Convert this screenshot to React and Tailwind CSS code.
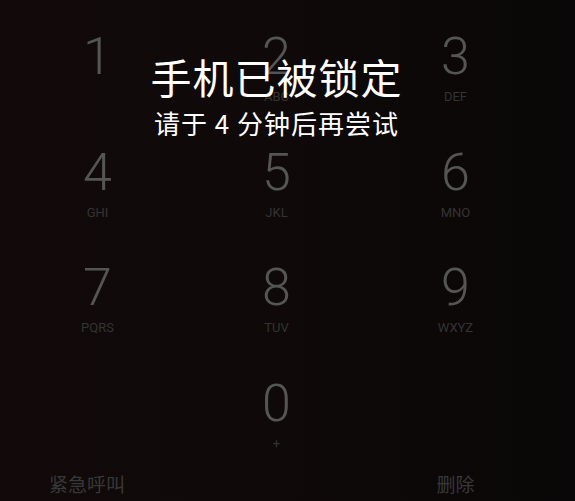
import React from "react";

const keys = [
  { d: "1", l: "" },
  { d: "2", l: "ABC" },
  { d: "3", l: "DEF" },
  { d: "4", l: "GHI" },
  { d: "5", l: "JKL" },
  { d: "6", l: "MNO" },
  { d: "7", l: "PQRS" },
  { d: "8", l: "TUV" },
  { d: "9", l: "WXYZ" },
];

const Key = ({ d, l }) => (
  <div className="h-[115.5px] flex flex-col items-center">
    <div className="text-[52px] leading-none font-light text-[#555555] font-['Roboto',sans-serif]">
      {d}
    </div>
    <div className="mt-[7px] h-[13px] text-[13px] leading-none text-[#343434] font-['Roboto',sans-serif]">
      {l}
    </div>
  </div>
);

const App = () => {
  return (
    <div className="relative w-[575px] h-[501px] overflow-hidden bg-gradient-to-r from-[#120a0a] via-[#0f0909] to-[#090707]">
      {/* keypad */}
      <div className="ml-[8px] w-[537px] pt-[31px]">
        <div className="grid grid-cols-3">
          {keys.map((k) => (
            <Key key={k.d} d={k.d} l={k.l} />
          ))}
          <div />
          <div className="flex flex-col items-center">
            <div className="text-[52px] leading-none font-light text-[#555555] font-['Roboto',sans-serif]">
              0
            </div>
            <div className="mt-[7px] text-[13px] leading-none text-[#343434] font-['Roboto',sans-serif]">
              +
            </div>
          </div>
          <div />
        </div>

        <div className="grid grid-cols-3 mt-[24px] text-[19px] leading-none text-[#383838] font-['Noto_Sans_CJK_SC',sans-serif]">
          <div className="pl-[41px]">紧急呼叫</div>
          <div />
          <div className="text-center">删除</div>
        </div>
      </div>

      {/* lock message */}
      <div className="absolute left-0 right-[22px] top-[56px] flex flex-col items-center text-white font-['Noto_Sans_CJK_SC',sans-serif]">
        <div className="text-[41px] leading-none tracking-[1px]">手机已被锁定</div>
        <div className="mt-[13px] text-[26px] leading-none tracking-[1px]">请于 4 分钟后再尝试</div>
      </div>
    </div>
  );
};

export default App;
